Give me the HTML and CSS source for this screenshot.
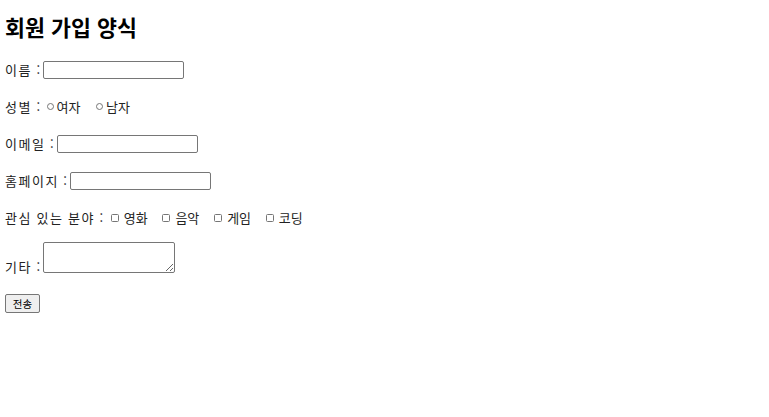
FILE: index.html
```html
<!DOCTYPE html>
<html lang="ko">
<head>
<meta charset="utf-8">
<title>회원 가입 양식</title>
<link rel="stylesheet" href="styles.css">
</head>
<body>
<h1 class="title">회원 가입 양식</h1>
<form class="form">
  <div class="row">
    <span class="lbl">이름</span><span class="colon">:</span>
    <input class="text" type="text">
  </div>
  <div class="row row-radio">
    <span class="lbl">성별</span><span class="colon">:</span>
    <span class="opt radio-opt"><span class="radio"></span>여자</span>
    <span class="opt radio-opt"><span class="radio"></span>남자</span>
  </div>
  <div class="row">
    <span class="lbl">이메일</span><span class="colon">:</span>
    <input class="text" type="text">
  </div>
  <div class="row">
    <span class="lbl">홈페이지</span><span class="colon">:</span>
    <input class="text" type="text">
  </div>
  <div class="row row-check">
    <span class="lbl">관심 있는 분야</span><span class="colon">:</span>
    <span class="opt check-opt"><span class="check"></span>영화</span>
    <span class="opt check-opt"><span class="check"></span>음악</span>
    <span class="opt check-opt"><span class="check"></span>게임</span>
    <span class="opt check-opt"><span class="check"></span>코딩</span>
  </div>
  <div class="row row-area">
    <span class="lbl area-lbl">기타</span><span class="colon area-lbl">:</span>
    <textarea class="area"></textarea>
  </div>
  <div class="row row-btn">
    <button class="btn" type="button">전송</button>
  </div>
</form>
</body>
</html>
```
FILE: styles.css
```css
html, body {
  background: #fff;
}
body {
  margin: 5px;
  font-family: "Noto Sans CJK KR", "Noto Sans", sans-serif;
  font-size: 13px;
  color: #222;
}
.title {
  font-size: 21.7px;
  line-height: 28px;
  font-weight: bold;
  color: #000;
  margin: 7.5px 0 0;
}
.form {
  margin: 20px 0 0;
  display: flex;
  flex-direction: column;
  align-items: flex-start;
}
.row {
  display: flex;
  align-items: center;
  height: 18px;
  margin-top: 19px;
  white-space: nowrap;
}
.form .row:first-child {
  margin-top: 0;
}
.lbl {
  letter-spacing: 1.5px;
  word-spacing: -0.5px;
}
.colon {
  margin-left: 4.5px;
  margin-right: 3px;
}
.text {
  box-sizing: border-box;
  width: 141px;
  height: 18px;
  margin: 0;
  padding: 1px 2px;
  border: 1px solid #767676;
  border-radius: 2px;
  background: #fff;
  font: inherit;
}
.opt {
  display: flex;
  align-items: center;
}
.row-radio .colon {
  margin-right: 7px;
}
.radio-opt + .radio-opt {
  margin-left: 16px;
}
.radio {
  box-sizing: border-box;
  width: 7px;
  height: 7px;
  border: 1px solid #767676;
  border-radius: 50%;
  margin-right: 2.5px;
}
.row-check .colon {
  margin-right: 7.5px;
}
.check-opt + .check-opt {
  margin-left: 14.8px;
}
.check {
  box-sizing: border-box;
  width: 8px;
  height: 8px;
  border: 1px solid #767676;
  border-radius: 1.5px;
  margin-right: 5px;
}
.row-area {
  height: 31px;
  margin-top: 15.8px;
  align-items: flex-end;
}
.area-lbl {
  margin-bottom: -3px;
}
.area {
  box-sizing: border-box;
  width: 132px;
  height: 31px;
  margin: 0;
  border: 1px solid #767676;
  border-radius: 2px;
  font: inherit;
  resize: both;
}
.row-btn {
  height: 19px;
  margin-top: 21px;
}
.btn {
  box-sizing: border-box;
  height: 19px;
  width: 35px;
  margin: 0;
  padding: 0;
  border: 1px solid #767676;
  border-radius: 2px;
  background: #efefef;
  font-family: inherit;
  font-size: 10.5px;
  color: #000;
}
```
